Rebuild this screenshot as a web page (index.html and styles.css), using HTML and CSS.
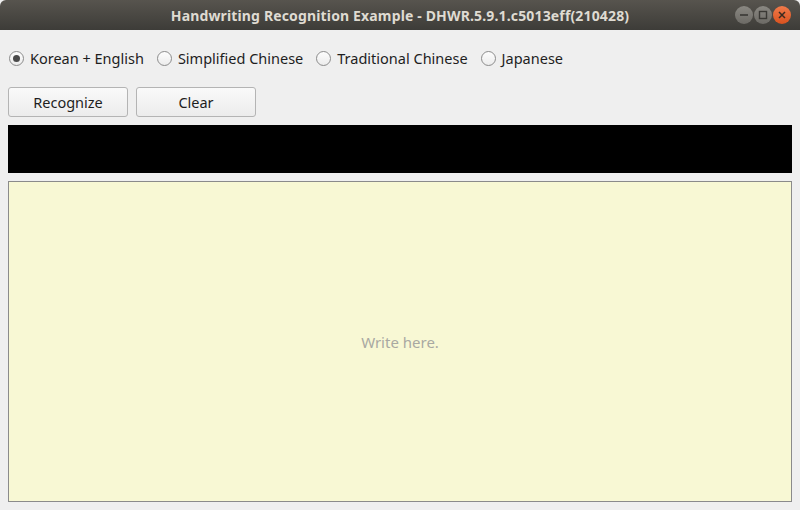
FILE: index.html
```html
<!DOCTYPE html>
<html>
<head>
<meta charset="utf-8">
<link rel="stylesheet" href="styles.css">
</head>
<body>
<div class="window">
  <div class="titlebar">
    <div class="title">Handwriting Recognition Example - DHWR.5.9.1.c5013eff(210428)</div>
    <div class="wbtns">
      <span class="wbtn"><svg width="18" height="18" viewBox="0 0 18 18"><line x1="5" y1="9" x2="13" y2="9" stroke="#3a3935" stroke-width="1.6"/></svg></span>
      <span class="wbtn"><svg width="18" height="18" viewBox="0 0 18 18"><rect x="5.5" y="5.5" width="7" height="7" fill="none" stroke="#3a3935" stroke-width="1.4"/></svg></span>
      <span class="wbtn close"><svg width="18" height="18" viewBox="0 0 18 18"><path d="M6 6 L12 12 M12 6 L6 12" stroke="#3a2a20" stroke-width="1.5"/></svg></span>
    </div>
  </div>
  <div class="content">
    <div class="radios">
      <label class="radio"><span class="circle checked"></span>Korean + English</label>
      <label class="radio"><span class="circle"></span>Simplified Chinese</label>
      <label class="radio"><span class="circle"></span>Traditional Chinese</label>
      <label class="radio"><span class="circle"></span>Japanese</label>
    </div>
    <div class="buttons">
      <button class="btn">Recognize</button>
      <button class="btn">Clear</button>
    </div>
    <div class="result"></div>
    <div class="canvas"><span class="hint">Write here.</span></div>
  </div>
</div>
</body>
</html>
```
FILE: styles.css
```css
* { box-sizing: border-box; }
html, body { margin: 0; padding: 0; }
body {
  width: 800px;
  height: 510px;
  overflow: hidden;
  background: #efefef;
  font-family: "Noto Sans", "DejaVu Sans", sans-serif;
}
.window { display: flex; flex-direction: column; height: 510px; }
.titlebar {
  height: 30px;
  flex: none;
  background: linear-gradient(#57544e, #3d3c38);
  border-radius: 6px 6px 0 0;
  position: relative;
  display: flex;
  align-items: center;
  justify-content: center;
}
.title {
  color: #dfdbd2;
  font-weight: bold;
  font-size: 14px;
  letter-spacing: 0.15px;
}
.wbtns {
  position: absolute;
  right: 9px;
  top: 6px;
  display: flex;
  gap: 1px;
}
.wbtn {
  width: 18px;
  height: 18px;
  border-radius: 50%;
  background: linear-gradient(#8a8882, #6c6a65);
  display: block;
}
.wbtn svg { display: block; }
.wbtn.close { background: linear-gradient(#f07a4a, #d9521f); }
.content {
  flex: 1;
  display: flex;
  flex-direction: column;
  padding: 0 8px 8px 8px;
}
.radios {
  display: flex;
  align-items: center;
  height: 57px;
  padding-bottom: 1px;
  padding-left: 1px;
  gap: 13px;
  font-size: 14.5px;
  color: #1e1e1e;
}
.radio { display: flex; align-items: center; gap: 6px; }
.circle {
  width: 15px;
  height: 15px;
  border-radius: 50%;
  border: 1px solid #8c8c8c;
  background: linear-gradient(#fdfdfd, #ececec);
  display: flex;
  align-items: center;
  justify-content: center;
}
.circle.checked::after {
  content: "";
  width: 7px;
  height: 7px;
  border-radius: 50%;
  background: #4a4a4a;
}
.buttons { display: flex; gap: 8px; }
.btn {
  width: 120px;
  height: 30px;
  border: 1px solid #b4b4b4;
  border-radius: 3px;
  background: linear-gradient(#fafafa, #ececec);
  font-family: inherit;
  font-size: 14.5px;
  color: #1e1e1e;
  padding: 0 0 1px 0;
}
.result {
  height: 48px;
  background: #000;
  margin-top: 8px;
  flex: none;
}
.canvas {
  flex: 1;
  margin-top: 8px;
  background: #f8f8d4;
  border: 1px solid #8b8b8b;
  display: flex;
  align-items: center;
  justify-content: center;
}
.hint { color: #a9a9a2; font-size: 15px; }
```
